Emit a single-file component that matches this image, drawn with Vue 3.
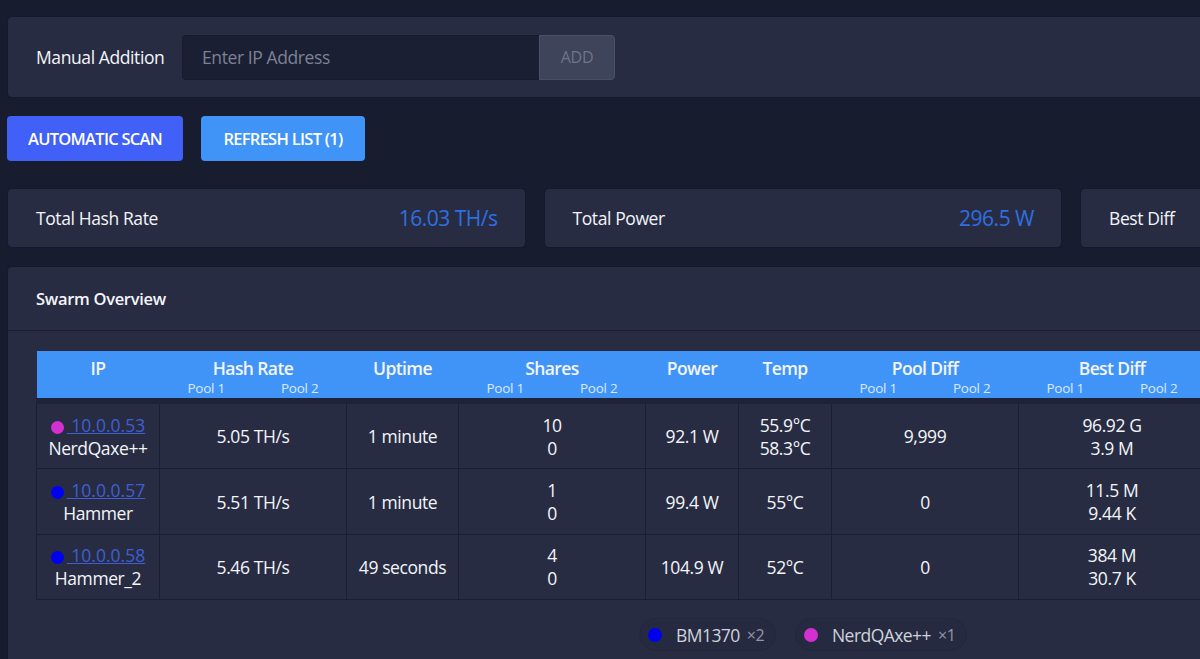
<script setup>
const devices = [
  { ip: '10.0.0.53', name: 'NerdQaxe++', color: '#d42fd0', hash: '5.05 TH/s', uptime: '1 minute', shares: ['10', '0'], power: '92.1 W', temp: ['55.9°C', '58.3°C'], poolDiff: '9,999', best: ['96.92 G', '3.9 M'] },
  { ip: '10.0.0.57', name: 'Hammer', color: '#0000f0', hash: '5.51 TH/s', uptime: '1 minute', shares: ['1', '0'], power: '99.4 W', temp: ['55°C'], poolDiff: '0', best: ['11.5 M', '9.44 K'] },
  { ip: '10.0.0.58', name: 'Hammer_2', color: '#0000f0', hash: '5.46 TH/s', uptime: '49 seconds', shares: ['4', '0'], power: '104.9 W', temp: ['52°C'], poolDiff: '0', best: ['384 M', '30.7 K'] },
]
const columns = [
  { title: 'IP' },
  { title: 'Hash Rate', pools: true },
  { title: 'Uptime' },
  { title: 'Shares', pools: true },
  { title: 'Power' },
  { title: 'Temp' },
  { title: 'Pool Diff', pools: true },
  { title: 'Best Diff', pools: true },
]
const stats = [
  { label: 'Total Hash Rate', value: '16.03 TH/s' },
  { label: 'Total Power', value: '296.5 W' },
  { label: 'Best Diff', value: '' },
]
const legend = [
  { name: 'BM1370', color: '#0000f0', count: '×2' },
  { name: 'NerdQAxe++', color: '#d42fd0', count: '×1' },
]
</script>

<template>
  <div class="page">
    <!-- Manual addition -->
    <section class="card manual">
      <label class="manual-label">Manual Addition</label>
      <div class="manual-group">
        <input class="manual-input" placeholder="Enter IP Address" />
        <button class="manual-add">ADD</button>
      </div>
    </section>

    <div class="actions">
      <button class="btn btn-scan">AUTOMATIC SCAN</button>
      <button class="btn btn-refresh">REFRESH LIST (1)</button>
    </div>

    <div class="stats">
      <div v-for="s in stats" :key="s.label" class="card stat">
        <span>{{ s.label }}</span>
        <span class="stat-value">{{ s.value }}</span>
      </div>
    </div>

    <!-- Swarm table -->
    <section class="card swarm">
      <h2 class="swarm-title">Swarm Overview</h2>
      <div class="swarm-body">
        <table class="swarm-table">
          <colgroup>
            <col class="col-ip" /><col class="col-wide" /><col class="col-up" /><col class="col-wide" />
            <col class="col-small" /><col class="col-small" /><col class="col-wide" /><col class="col-wide" />
          </colgroup>
          <thead>
            <tr>
              <th v-for="c in columns" :key="c.title">
                <div class="th-title">{{ c.title }}</div>
                <div class="th-pools">
                  <template v-if="c.pools"><span>Pool 1</span><span>Pool 2</span></template>
                </div>
              </th>
            </tr>
          </thead>
          <tbody>
            <tr v-for="d in devices" :key="d.ip">
              <td>
                <div><i class="dot dot-ip" :style="{ background: d.color }" /><a class="ip-link" href="#">&nbsp;{{ d.ip }}</a></div>
                <div>{{ d.name }}</div>
              </td>
              <td>{{ d.hash }}</td>
              <td>{{ d.uptime }}</td>
              <td><div v-for="(v, i) in d.shares" :key="i">{{ v }}</div></td>
              <td>{{ d.power }}</td>
              <td><div v-for="t in d.temp" :key="t">{{ t }}</div></td>
              <td>{{ d.poolDiff }}</td>
              <td><div v-for="b in d.best" :key="b">{{ b }}</div></td>
            </tr>
          </tbody>
        </table>
        <div class="legend">
          <div v-for="l in legend" :key="l.name" class="chip">
            <i class="dot" :style="{ background: l.color }" />
            <span>{{ l.name }}</span>
            <span class="chip-count">{{ l.count }}</span>
          </div>
        </div>
      </div>
    </section>
  </div>
</template>

<style>
html, body { margin: 0; overflow: hidden; background: #171c2e; }
</style>

<style scoped>
.page {
  width: 1610px; height: 659px; overflow: hidden;
  box-sizing: border-box; padding: 17px 0 0 8px;
  background: #171c2e; color: #f4f5f8;
  font-family: "Open Sans", "Noto Sans", sans-serif;
  font-size: 17.5px; letter-spacing: -.4px;
}
.card {
  background: #272c43; border-radius: 4px;
  box-shadow: 0 0 1px rgba(8, 11, 24, .9);
}
.manual {
  height: 80px; box-sizing: border-box;
  display: flex; align-items: center; padding-left: 28px;
}
.manual-label { width: 146px; }
.manual-group { display: flex; height: 45px; }
.manual-input {
  width: 357px; box-sizing: border-box;
  background: #1a1f33; border: 1px solid #171b2c; border-right: 0;
  border-radius: 4px 0 0 4px; padding: 0 19px;
  color: #fff; font: inherit; letter-spacing: inherit; outline: none;
}
.manual-input::placeholder { color: #7d8294; opacity: 1; }
.manual-add {
  width: 76px; background: #3e4459; border: 1px solid #4a5066;
  border-radius: 0 4px 4px 0; color: #6f7588;
  font: inherit; font-size: 16px; letter-spacing: -.2px;
}
.actions { display: flex; gap: 18px; margin: 19px 0 28px -1px; }
.btn {
  height: 45px; border: 0; border-radius: 4px; color: #fff;
  font: inherit; font-size: 16.5px; font-weight: 600; letter-spacing: -.72px;
}
.btn-scan { width: 176px; background: #4060f8; }
.btn-refresh { width: 164px; background: #4094f8; }
.stats { display: flex; gap: 20px; }
.stat {
  flex: 0 0 516.5px; height: 58px; box-sizing: border-box;
  display: flex; align-items: center; justify-content: space-between;
  padding: 0 27px 0 28px;
}
.stat-value { color: #2f6fe0; font-size: 21px; letter-spacing: -.5px; }
.swarm { margin-top: 20px; height: 420px; }
.swarm-title {
  margin: 0; height: 64px; box-sizing: border-box;
  display: flex; align-items: center; padding: 0 28px;
  font-size: 16.5px; font-weight: 600; letter-spacing: -.3px;
  border-bottom: 1px solid #1a1e31;
}
.swarm-body { padding: 20px 28px 0; }
.swarm-table {
  width: 1169px; table-layout: fixed; border-collapse: collapse;
  text-align: center;
}
.col-ip { width: 123px; }
.col-wide { width: 187px; }
.col-up { width: 112px; }
.col-small { width: 93px; }
.swarm-table th {
  height: 46px; padding: 0 0 1px; background: #4094f8;
  border-bottom: 6px solid #1e2337; font-weight: 600;
  vertical-align: top;
}
.th-title { font-size: 17.5px; line-height: 24px; margin-top: 5px; letter-spacing: -.6px; }
.th-pools {
  display: flex; justify-content: space-between; padding: 0 28px;
  font-size: 13.5px; font-weight: 400; line-height: 16px; height: 15px;
  letter-spacing: -.25px; color: #dbe9fd;
}
.swarm-table td {
  height: 63.4px; padding: 1px 0 0; line-height: 23px;
  border: 1px solid #1a1e31;
}
.dot {
  display: inline-block; width: 13px; height: 13px; border-radius: 50%;
}
.dot-ip { margin-right: 3px; vertical-align: -2px; }
.ip-link { color: #3f5fd0; text-decoration: underline; letter-spacing: 0; }
.legend { display: flex; gap: 19px; margin: 18px 0 0 603px; }
.chip {
  display: flex; align-items: center; height: 33px; box-sizing: border-box;
  padding: 0 11px 0 8px; border-radius: 17px; background: #252a41;
  border: 1px solid #222739; color: #cfd2da; letter-spacing: -.55px;
}
.chip .dot { width: 14px; height: 14px; margin-right: 14px; }
.chip-count { margin-left: 7px; color: #9296a6; font-size: 16px; }
</style>
